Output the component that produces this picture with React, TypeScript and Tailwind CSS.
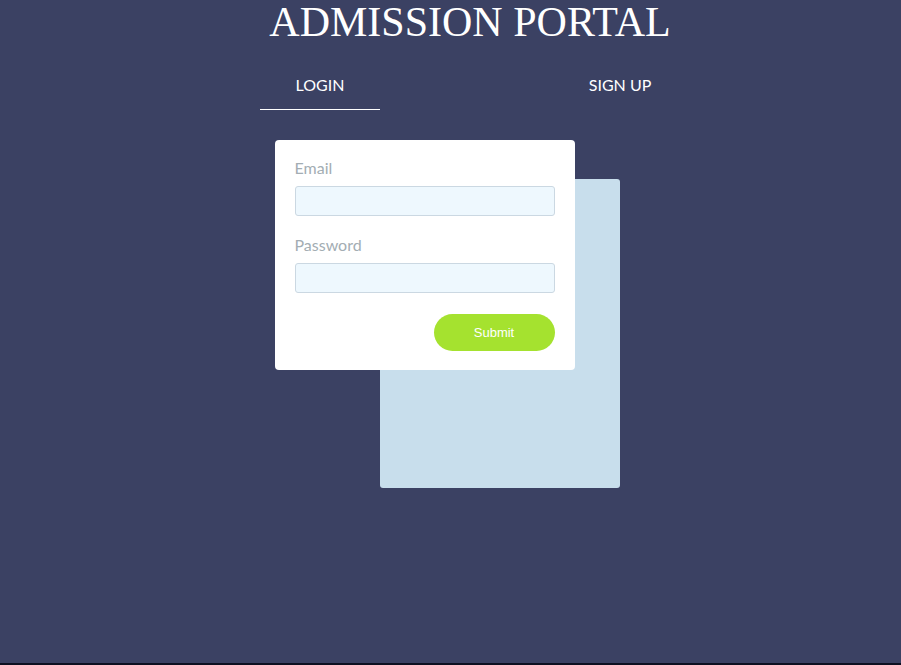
import React from 'react';

const App = () => {
  return (
    <div className="w-full h-[665px] bg-[#3b4163] flex flex-col overflow-hidden">
      <div className="flex-1 flex flex-col items-center pl-[39px]">
        <h1 className="text-white text-[42px] leading-[42px] mt-[1px] font-['Liberation_Serif',serif]">
          ADMISSION PORTAL
        </h1>

        <div className="flex w-[420px] justify-between mt-[26px] font-['Lato',sans-serif] text-white text-[16px] leading-[20px]">
          <div className="w-[120px] h-[41px] pt-[6px] text-center border-b border-white">LOGIN</div>
          <div className="w-[120px] h-[41px] pt-[6px] text-center">SIGN UP</div>
        </div>

        <div className="relative w-[345px] h-[378px] mt-[30px] mr-[46px]">
          <div className="absolute left-[105px] top-[39px] w-[240px] h-[309px] bg-[#c8deec] rounded-[3px]" />
          <div className="absolute left-0 top-0 w-[300px] h-[230px] bg-white rounded-[4px] px-[20px] pt-[18px] font-['Lato',sans-serif]">
            <label className="block text-[16px] leading-[20px] text-[#a3adb3]">Email</label>
            <input className="block w-full h-[30px] mt-[8px] bg-[#eef8fe] border border-[#cbd8e2] rounded-[3px] outline-none" />
            <label className="block text-[16px] leading-[20px] text-[#a3adb3] mt-[19px]">Password</label>
            <input type="password" className="block w-full h-[30px] mt-[8px] bg-[#eef8fe] border border-[#cbd8e2] rounded-[3px] outline-none" />
            <div className="flex justify-end mt-[21px]">
              <button className="w-[121px] h-[37px] rounded-full bg-[#a5e22f] text-white text-[13px] font-['Liberation_Sans',sans-serif]">
                Submit
              </button>
            </div>
          </div>
        </div>
      </div>
      <div className="h-[2px] bg-[#0d1021]" />
    </div>
  );
};

export default App;
